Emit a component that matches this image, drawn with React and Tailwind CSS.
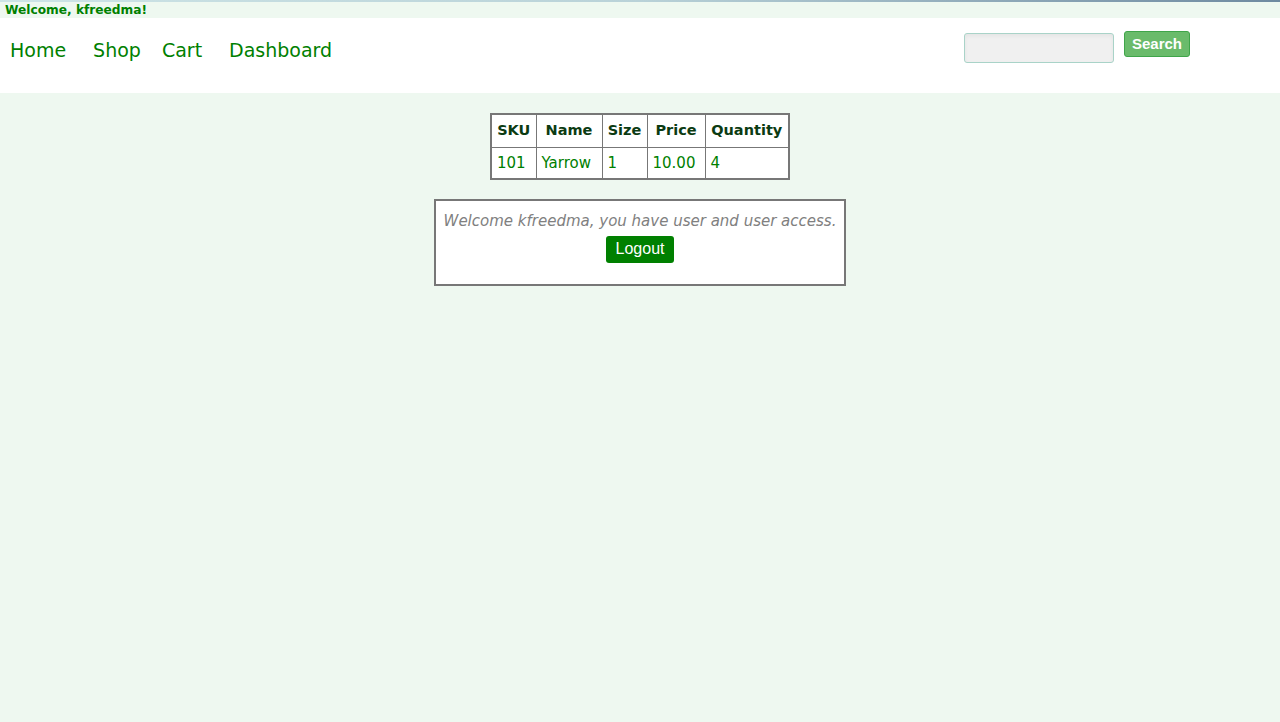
import React from 'react';

const font = { fontFamily: '"DejaVu Sans", "Lucida Grande", sans-serif' };

export default function App() {
  const cols = [
    { key: 'sku', label: 'SKU', w: 'w-[45px]' },
    { key: 'name', label: 'Name', w: 'w-[66px]' },
    { key: 'size', label: 'Size', w: 'w-[45px]' },
    { key: 'price', label: 'Price', w: 'w-[58px]' },
    { key: 'qty', label: 'Quantity', w: 'w-[84px]' },
  ];
  const row = { sku: '101', name: 'Yarrow', size: '1', price: '10.00', qty: '4' };

  return (
    <div className="min-h-[722px] bg-[#eef8f0]" style={font}>
      {/* top strip */}
      <div className="h-[2px] bg-gradient-to-r from-[#cde4e6] via-[#b9d2d8] to-[#6e8aa0]" />
      <div className="h-[16px] flex items-center pl-[5px] text-[12.2px] leading-none font-bold text-[#008000]">
        Welcome, kfreedma!
      </div>

      {/* nav */}
      <div className="h-[75px] bg-white flex items-start">
        <nav className="flex items-center pt-[18px] pl-[10px] text-[19px] text-[#008000]">
          <a className="mr-[27px]">Home</a>
          <a className="mr-[21px]">Shop</a>
          <a className="mr-[27px]">Cart</a>
          <a>Dashboard</a>
        </nav>
        <div className="ml-auto mr-[90px] flex items-start pt-[15px]">
          <input className="w-[150px] h-[30px] bg-[#f0f0f0] border border-[#a9d3c8] rounded-[3px] shadow-inner" />
          <button className="ml-[10px] -mt-[2px] h-[26px] px-[7px] bg-[#6abb6b] border border-[#3fa54a] rounded-[3px] text-white text-[15px] font-bold font-['Liberation_Sans',sans-serif]">
            Search
          </button>
        </div>
      </div>

      {/* content */}
      <div className="flex flex-col items-center pt-[20px]">
        <table className="border-collapse border-2 border-[#777] bg-white">
          <thead>
            <tr>
              {cols.map((c) => (
                <th key={c.key} className={`${c.w} h-[33px] border border-[#777] text-[14.5px] font-bold text-[#0b3b12] text-center px-[5px]`}>
                  {c.label}
                </th>
              ))}
            </tr>
          </thead>
          <tbody>
            <tr>
              {cols.map((c) => (
                <td key={c.key} className="h-[32px] border border-[#777] text-[15px] text-[#008000] text-left px-[5px]">
                  {row[c.key]}
                </td>
              ))}
            </tr>
          </tbody>
        </table>

        <div className="mt-[19px] w-[412px] h-[87px] border-2 border-[#777] bg-white flex flex-col items-center pt-[9px]">
          <p className="text-[15px] italic text-[#808080]">Welcome kfreedma, you have user and user access.</p>
          <button className="mt-[3px] h-[27px] px-[10px] bg-[#008000] rounded-[3px] text-white text-[16px] font-['Liberation_Sans',sans-serif]">
            Logout
          </button>
        </div>
      </div>
    </div>
  );
}
